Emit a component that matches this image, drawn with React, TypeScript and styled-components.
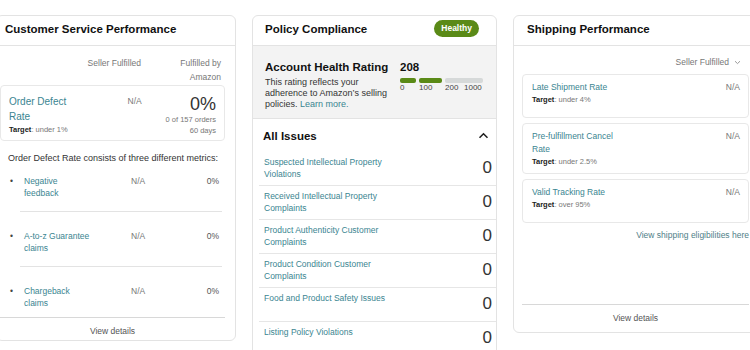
import React from 'react'
import styled, { createGlobalStyle } from 'styled-components'

const GlobalStyle = createGlobalStyle`
  body {
    margin: 0;
    background: #fff;
    overflow: hidden;
    font-family: "Liberation Sans", Arial, sans-serif;
    color: #111;
  }
`

const LINK = '#3a8591'
const BORDER = '#e3e3e3'

const Page = styled.div`
  display: flex;
  align-items: flex-start;
  gap: 16px;
  width: 780px;
  margin-left: -4px;
  padding-top: 15px;
`

const Panel = styled.section<{ $w: number; $h: number }>`
  width: ${(p) => p.$w}px;
  height: ${(p) => p.$h}px;
  flex: none;
  box-sizing: border-box;
  display: flex;
  flex-direction: column;
  border: 1px solid ${BORDER};
  border-radius: 6px;
  background: #fff;
  overflow: hidden;
`

const Header = styled.div<{ $pl: number; $pr?: number }>`
  height: 30px;
  flex: none;
  box-sizing: border-box;
  display: flex;
  align-items: center;
  justify-content: space-between;
  padding: 0 ${(p) => p.$pr ?? 0}px 4px ${(p) => p.$pl}px;
  border-bottom: 1px solid ${BORDER};
`

const Title = styled.h2`
  margin: 0;
  font-size: 11.5px;
  font-weight: 700;
  color: #111;
  white-space: nowrap;
`

const Badge = styled.span`
  height: 17px;
  line-height: 17px;
  padding: 0 7px;
  border-radius: 9px;
  background: #5a8a17;
  color: #fff;
  font-size: 8.5px;
  font-weight: 700;
`

const Link = styled.span`
  color: ${LINK};
`

/* ---------- customer service ---------- */

const CsBody = styled.div`
  flex: 1;
  display: flex;
  flex-direction: column;
  padding: 0 10px 0 3px;
`

const ColHeads = styled.div`
  display: flex;
  margin-top: 10px;
  padding: 0 4px 0 8px;
  font-size: 8.5px;
  line-height: 14px;
  color: #777;
`

const Spacer = styled.div`
  flex: 1;
`

const MidCol = styled.div<{ $w: number }>`
  width: ${(p) => p.$w}px;
  text-align: right;
`

const RightCol = styled.div<{ $w: number }>`
  width: ${(p) => p.$w}px;
  text-align: right;
`

const MetricCard = styled.div`
  display: flex;
  margin-top: 1px;
  padding: 8px 8px 4px;
  border: 1px solid #e8e8e8;
  border-radius: 4px;
`

const MetricName = styled.div`
  flex: 1;
  font-size: 10px;
  line-height: 15px;
  color: ${LINK};
`

const MetricNameText = styled.div<{ $w: number }>`
  width: ${(p) => p.$w}px;
`

const Target = styled.div`
  font-size: 7.5px;
  line-height: 11px;
  color: #777;

  b {
    color: #222;
  }
`

const NA = styled.div`
  font-size: 8.5px;
  line-height: 15px;
  color: #777;
`

const BigPct = styled.div`
  font-size: 18px;
  line-height: 20px;
  color: #333;
`

const SmallGray = styled.div`
  font-size: 7.5px;
  line-height: 11px;
  color: #777;
`

const Description = styled.p`
  margin: 11px 0 0;
  padding-left: 8px;
  font-size: 9px;
  line-height: 12px;
  color: #333;
`

const SubList = styled.ul`
  list-style: none;
  margin: 0;
  padding: 0 3px 0 20px;
`

const SubRow = styled.li`
  display: flex;
  padding: 18px 3px 12px 0;
  border-bottom: 1px solid #e3e3e3;
  font-size: 8.5px;
  line-height: 12px;

  &:first-child {
    padding-top: 11px;
  }
  &:last-child {
    border-bottom: none;
    padding-bottom: 8px;
  }
`

const Bullet = styled.span`
  width: 14px;
  margin-left: -10px;
  color: #444;
  flex: none;
`

const SubName = styled.span`
  width: 68px;
  margin-right: 39px;
  flex: none;
  color: ${LINK};
`

const SubNA = styled.span`
  color: #777;
`

const SubPct = styled.span`
  flex: 1;
  text-align: right;
  color: #555;
`

const Footer = styled.div`
  border-top: 1px solid #d8d8d8;
  text-align: center;
  font-size: 8.5px;
  line-height: 12px;
  padding-top: 7px;
  color: #555;
`

/* ---------- policy compliance ---------- */

const HealthSection = styled.div`
  height: 73px;
  flex: none;
  box-sizing: border-box;
  display: flex;
  justify-content: space-between;
  padding: 14px 12px 0 12px;
  background: #f3f3f3;
  border-bottom: 1px solid ${BORDER};
`

const HealthText = styled.div`
  width: 126px;
`

const HealthTitle = styled.div`
  font-size: 11.5px;
  font-weight: 700;
  line-height: 15px;
  white-space: nowrap;
`

const HealthDesc = styled.div`
  margin-top: 2px;
  font-size: 9px;
  line-height: 11px;
  color: #333;
`

const Rating = styled.div`
  width: 84px;
`

const RatingValue = styled.div`
  font-size: 11.5px;
  font-weight: 700;
  line-height: 15px;
`

const Bars = styled.div`
  display: flex;
  gap: 3px;
  margin-top: 3px;
`

const Bar = styled.div<{ $w: number; $on?: boolean }>`
  width: ${(p) => p.$w}px;
  height: 5px;
  border-radius: 2px;
  background: ${(p) => (p.$on ? '#5a8a17' : '#d6d9d9')};
`

const BarLabels = styled.div`
  display: flex;
  font-size: 8px;
  line-height: 10px;
  color: #444;
`

const BarLabel = styled.span<{ $w: number }>`
  width: ${(p) => p.$w}px;
`

const IssuesHeader = styled.div`
  height: 33px;
  flex: none;
  box-sizing: border-box;
  display: flex;
  align-items: center;
  justify-content: space-between;
  padding: 0 7px 0 10px;
`

const IssueRow = styled.div`
  display: flex;
  align-items: center;
  justify-content: space-between;
  margin-left: 6px;
  padding: 4px 4px 5px 5px;
  border-bottom: 1px solid #e6e6e6;
`

const IssueName = styled.div`
  width: 150px;
  min-height: 24px;
  font-size: 8.5px;
  line-height: 12px;
  color: ${LINK};
`

const IssueCount = styled.div`
  font-size: 17px;
  line-height: 20px;
  color: #333;
`

/* ---------- shipping ---------- */

const ShipBody = styled.div`
  flex: 1;
  display: flex;
  flex-direction: column;
  padding: 0 9px 0 8px;
`

const FilterSelect = styled.div`
  display: flex;
  align-items: center;
  justify-content: flex-end;
  gap: 5px;
  margin-top: 9px;
  padding-right: 8px;
  font-size: 8.5px;
  line-height: 14px;
  color: #777;
`

const ShipCards = styled.div`
  display: flex;
  flex-direction: column;
  gap: 5px;
  margin-top: 5px;
`

const ShipCard = styled.div`
  display: flex;
  justify-content: space-between;
  box-sizing: border-box;
  min-height: 44px;
  padding: 6px 8px 6px 9px;
  border: 1px solid #e8e8e8;
  border-radius: 4px;
`

const ShipName = styled.div`
  width: 92px;
  font-size: 8.5px;
  line-height: 13px;
  color: ${LINK};
`

const ShipNA = styled.div`
  font-size: 8.5px;
  line-height: 13px;
  color: #777;
`

const EligibilityLink = styled.div`
  margin-top: 6px;
  text-align: right;
  font-size: 8.5px;
  line-height: 13px;
  color: #4f8088;
`

const ShipFooter = styled(Footer)`
  margin-top: auto;
  padding: 7px 0 8px;
`

const ChevronUp = () => (
  <svg width="11" height="7" viewBox="0 0 11 7">
    <polyline points="1.5,5.8 5.5,1.8 9.5,5.8" fill="none" stroke="#222" strokeWidth="1.6" />
  </svg>
)

const ChevronDown = () => (
  <svg width="7" height="5" viewBox="0 0 7 5">
    <polyline points="1,1.2 3.5,3.6 6,1.2" fill="none" stroke="#999" strokeWidth="1" />
  </svg>
)

const subMetrics = ['Negative feedback', 'A-to-z Guarantee claims', 'Chargeback claims']

const issues = [
  'Suspected Intellectual Property Violations',
  'Received Intellectual Property Complaints',
  'Product Authenticity Customer Complaints',
  'Product Condition Customer Complaints',
  'Food and Product Safety Issues',
  'Listing Policy Violations',
]

const shipping = [
  { name: 'Late Shipment Rate', target: 'under 4%' },
  { name: 'Pre-fulfillment Cancel Rate', target: 'under 2.5%' },
  { name: 'Valid Tracking Rate', target: 'over 95%' },
]

const App: React.FC = () => {
  return (
    <>
      <GlobalStyle />
      <Page>
        <Panel $w={240} $h={326}>
          <Header $pl={8}>
            <Title>Customer Service Performance</Title>
          </Header>
          <CsBody>
            <ColHeads>
              <Spacer />
              <MidCol $w={70}>Seller Fulfilled</MidCol>
              <RightCol $w={80}>
                Fulfilled by
                <br />
                Amazon
              </RightCol>
            </ColHeads>
            <MetricCard>
              <MetricName>
                <MetricNameText $w={74}>Order Defect Rate</MetricNameText>
                <Target>
                  <b>Target</b>: under 1%
                </Target>
              </MetricName>
              <MidCol $w={60}>
                <NA>N/A</NA>
              </MidCol>
              <RightCol $w={76}>
                <BigPct>0%</BigPct>
                <SmallGray>0 of 157 orders</SmallGray>
                <SmallGray>60 days</SmallGray>
              </RightCol>
            </MetricCard>
            <Description>Order Defect Rate consists of three different metrics:</Description>
            <SubList>
              {subMetrics.map((m) => (
                <SubRow key={m}>
                  <Bullet>•</Bullet>
                  <SubName>{m}</SubName>
                  <SubNA>N/A</SubNA>
                  <SubPct>0%</SubPct>
                </SubRow>
              ))}
            </SubList>
            <Footer>View details</Footer>
          </CsBody>
        </Panel>

        <Panel $w={245} $h={360}>
          <Header $pl={12} $pr={17}>
            <Title>Policy Compliance</Title>
            <Badge>Healthy</Badge>
          </Header>
          <HealthSection>
            <HealthText>
              <HealthTitle>Account Health Rating</HealthTitle>
              <HealthDesc>
                This rating reflects your adherence to Amazon’s selling policies. <Link>Learn more.</Link>
              </HealthDesc>
            </HealthText>
            <Rating>
              <RatingValue>208</RatingValue>
              <Bars>
                <Bar $w={16} $on />
                <Bar $w={23} $on />
                <Bar $w={38} />
              </Bars>
              <BarLabels>
                <BarLabel $w={19}>0</BarLabel>
                <BarLabel $w={26}>100</BarLabel>
                <BarLabel $w={19}>200</BarLabel>
                <span>1000</span>
              </BarLabels>
            </Rating>
          </HealthSection>
          <IssuesHeader>
            <Title>All Issues</Title>
            <ChevronUp />
          </IssuesHeader>
          {issues.map((i) => (
            <IssueRow key={i}>
              <IssueName>{i}</IssueName>
              <IssueCount>0</IssueCount>
            </IssueRow>
          ))}
        </Panel>

        <Panel $w={246} $h={318}>
          <Header $pl={13}>
            <Title>Shipping Performance</Title>
          </Header>
          <ShipBody>
            <FilterSelect>
              Seller Fulfilled
              <ChevronDown />
            </FilterSelect>
            <ShipCards>
              {shipping.map((s) => (
                <ShipCard key={s.name}>
                  <div>
                    <ShipName>{s.name}</ShipName>
                    <Target>
                      <b>Target</b>: {s.target}
                    </Target>
                  </div>
                  <ShipNA>N/A</ShipNA>
                </ShipCard>
              ))}
            </ShipCards>
            <EligibilityLink>View shipping eligibilities here</EligibilityLink>
            <ShipFooter>View details</ShipFooter>
          </ShipBody>
        </Panel>
      </Page>
    </>
  )
}

export default App
